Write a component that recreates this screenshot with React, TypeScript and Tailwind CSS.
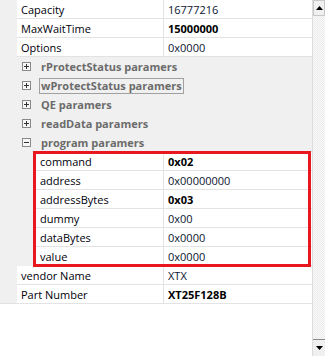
import React from "react";

type Row = { name: string; value: string; bold?: boolean };

const top: Row[] = [
  { name: "Capacity", value: "16777216" },
  { name: "MaxWaitTime", value: "15000000", bold: true },
  { name: "Options", value: "0x0000" },
];

const groups = [
  { label: "rProtectStatus paramers", focus: false },
  { label: "wProtectStatus paramers", focus: true },
  { label: "QE paramers", focus: false },
  { label: "readData paramers", focus: false },
];

const sub: Row[] = [
  { name: "command", value: "0x02", bold: true },
  { name: "address", value: "0x00000000" },
  { name: "addressBytes", value: "0x03", bold: true },
  { name: "dummy", value: "0x00" },
  { name: "dataBytes", value: "0x0000" },
  { name: "value", value: "0x0000" },
];

const bottom: Row[] = [
  { name: "vendor Name", value: "XTX" },
  { name: "Part Number", value: "XT25F128B", bold: true },
];

function PropRow({ row, gutter, last }: { row: Row; gutter: string; last?: boolean }) {
  return (
    <div className="flex h-[19px]">
      <div
        className={`${gutter} shrink-0 bg-[#f0f0f0] ${
          last ? "border-b border-[#e3e3e3]" : ""
        }`}
      />
      <div className="flex flex-1 border-b border-[#e3e3e3] bg-white">
        <div className="flex flex-1 items-center border-r border-[#e3e3e3] pl-[4px] text-[#00000a]">
          {row.name}
        </div>
        <div
          className={`flex w-[148px] shrink-0 items-center pl-[4px] ${
            row.bold ? "font-bold text-black" : "text-[#0a1530]"
          }`}
        >
          {row.value}
        </div>
      </div>
    </div>
  );
}

function Expander({ open }: { open: boolean }) {
  return (
    <svg width="9" height="9" viewBox="0 0 9 9" className="shrink-0">
      <rect x="0.5" y="0.5" width="8" height="8" fill="#f7f7f7" stroke="#8a8a8a" />
      <line x1="2" y1="4.5" x2="7" y2="4.5" stroke="#333" />
      {!open && <line x1="4.5" y1="2" x2="4.5" y2="7" stroke="#333" />}
    </svg>
  );
}

function GroupRow({ label, focus, open }: { label: string; focus: boolean; open: boolean }) {
  return (
    <div className="flex h-[19px] items-center bg-[#f0f0f0] pl-[22px]">
      <Expander open={open} />
      <div
        className={`ml-[8px] flex h-[16px] items-center whitespace-nowrap px-[1px] font-bold text-[#6b6b6b] ${
          focus ? "border border-[#a0a0a0]" : "border border-transparent"
        }`}
      >
        {label}
      </div>
    </div>
  );
}

export default function App() {
  return (
    <div
      className="flex h-[356px] w-[325px] overflow-hidden bg-white text-[11px] leading-none"
      style={{ fontFamily: '"Open Sans", "Noto Sans", sans-serif' }}
    >
      <div className="flex w-[312px] shrink-0 flex-col">
        {top.map((r) => (
          <PropRow key={r.name} row={r} gutter="w-[17px]" />
        ))}
        {groups.map((g) => (
          <GroupRow key={g.label} label={g.label} focus={g.focus} open={false} />
        ))}
        <GroupRow label="program paramers" focus={false} open={true} />
        <div className="relative">
          {sub.map((r) => (
            <PropRow key={r.name} row={r} gutter="w-[36px]" />
          ))}
          <div className="pointer-events-none absolute left-[33px] top-[-1px] h-[116px] w-[278px] border-[3px] border-[#e8161e]" />
        </div>
        {bottom.map((r, i) => (
          <PropRow key={r.name} row={r} gutter="w-[17px]" last={i === bottom.length - 1} />
        ))}
        <div className="flex-1 bg-white" />
      </div>
      <div className="flex w-[13px] shrink-0 flex-col border-l border-[#dcdcdc] bg-[#f3f3f3]">
        <div className="flex h-[16px] items-center justify-center border border-[#c8c8c8] bg-[#f0f0f0]">
          <svg width="7" height="4" viewBox="0 0 7 4">
            <polygon points="0,4 7,4 3.5,0" fill="#000" />
          </svg>
        </div>
        <div className="flex-1 bg-[conic-gradient(#ebebeb_25%,#fafafa_0_50%,#ebebeb_0_75%,#fafafa_0)] bg-[length:2px_2px]" />
        <div className="h-[1px] bg-[#8a8a8a]" />
        <div className="flex h-[16px] items-center justify-center bg-[#f0f0f0]">
          <svg width="7" height="4" viewBox="0 0 7 4">
            <polygon points="0,0 7,0 3.5,4" fill="#000" />
          </svg>
        </div>
      </div>
    </div>
  );
}
